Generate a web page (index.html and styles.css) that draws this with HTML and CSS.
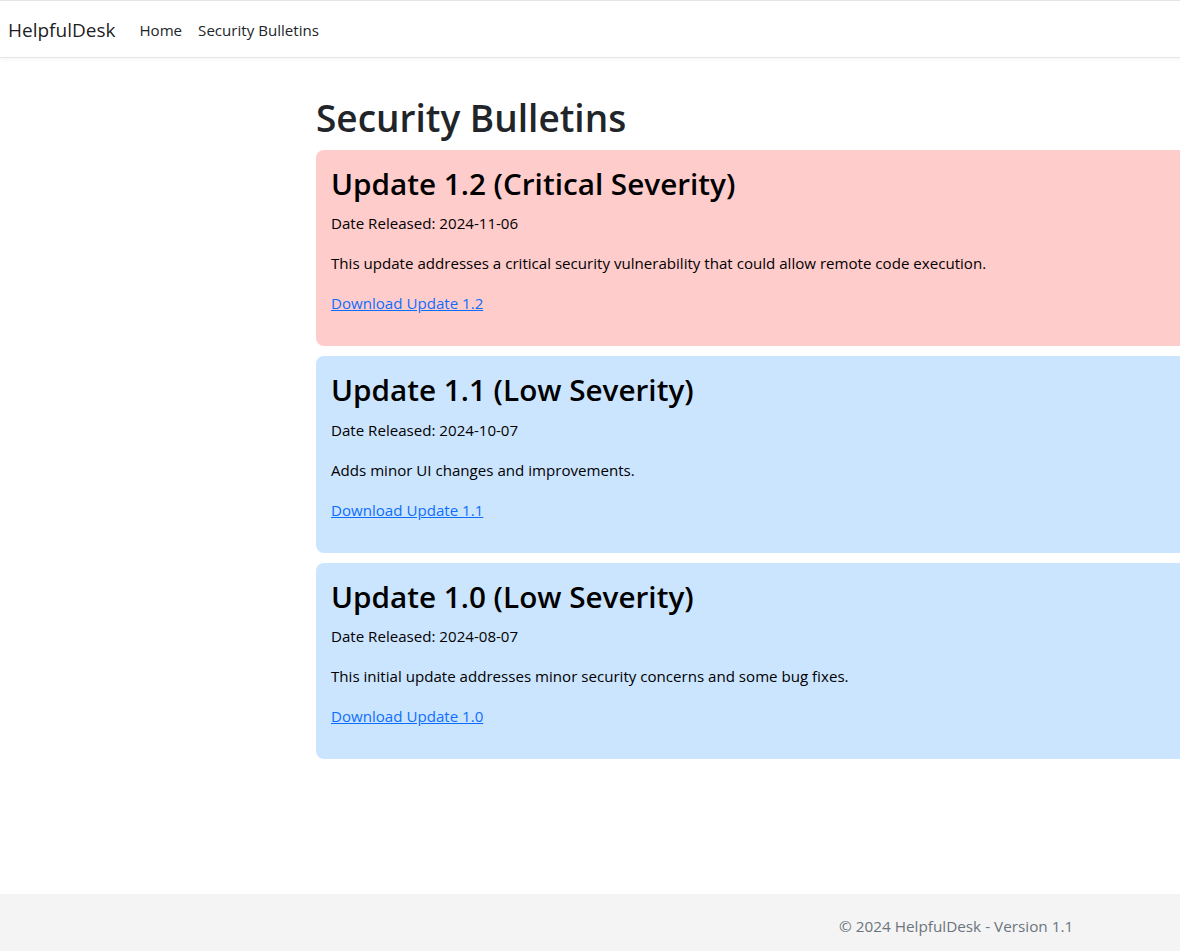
FILE: index.html
```html
<!DOCTYPE html>
<html lang="en">
<head>
<meta charset="utf-8">
<title>Security Bulletins - HelpfulDesk</title>
<link rel="stylesheet" href="styles.css">
</head>
<body>
<div class="page">
  <header class="navbar">
    <a class="brand" href="#">HelpfulDesk</a>
    <nav class="nav-links">
      <a class="nav-link" href="#">Home</a>
      <a class="nav-link" href="#">Security Bulletins</a>
    </nav>
  </header>
  <main class="main">
    <h1 class="title">Security Bulletins</h1>
    <section class="bulletin bulletin-critical">
      <h2 class="bulletin-title">Update 1.2 (Critical Severity)</h2>
      <p class="bulletin-text">Date Released: 2024-11-06</p>
      <p class="bulletin-text">This update addresses a critical security vulnerability that could allow remote code execution.</p>
      <p class="bulletin-text"><a class="download" href="#">Download Update 1.2</a></p>
    </section>
    <section class="bulletin bulletin-low">
      <h2 class="bulletin-title">Update 1.1 (Low Severity)</h2>
      <p class="bulletin-text">Date Released: 2024-10-07</p>
      <p class="bulletin-text">Adds minor UI changes and improvements.</p>
      <p class="bulletin-text"><a class="download" href="#">Download Update 1.1</a></p>
    </section>
    <section class="bulletin bulletin-low">
      <h2 class="bulletin-title">Update 1.0 (Low Severity)</h2>
      <p class="bulletin-text">Date Released: 2024-08-07</p>
      <p class="bulletin-text">This initial update addresses minor security concerns and some bug fixes.</p>
      <p class="bulletin-text"><a class="download" href="#">Download Update 1.0</a></p>
    </section>
  </main>
  <footer class="footer">
    <span class="footer-text">&copy; 2024 HelpfulDesk - Version 1.1</span>
  </footer>
</div>
</body>
</html>
```

FILE: styles.css
```css
* { box-sizing: border-box; }
html, body {
  margin: 0;
  padding: 0;
  height: 100%;
}
body {
  font-family: "Open Sans", "Noto Sans", sans-serif;
  font-size: 15.1px;
  line-height: 24px;
  color: #212529;
  background: #fff;
  overflow: hidden;
}
.page {
  position: relative;
  min-height: 951px;
  overflow: hidden;
}
.navbar {
  display: flex;
  align-items: center;
  height: 58px;
  padding: 2px 8px 0;
  border-top: 1px solid #e5e5e5;
  border-bottom: 1px solid #e5e5e5;
  box-shadow: 0 2px 4px rgba(0,0,0,0.04);
  background: #fff;
}
.brand {
  font-size: 19px;
  color: rgba(0,0,0,0.9);
  text-decoration: none;
  margin-right: 16px;
}
.nav-links { display: flex; }
.nav-link {
  color: #212529;
  text-decoration: none;
  padding: 8px 8px;
}
.main {
  margin-left: 316px;
  width: 1600px;
  padding-top: 36px;
}
.title {
  font-size: 37px;
  font-weight: 600;
  line-height: 48px;
  margin: 0 0 8px;
}
.bulletin {
  border-radius: 8px;
  padding: 15px;
  margin-bottom: 10px;
  color: #000;
}
.bulletin-critical { background: #ffcccc; }
.bulletin-low { background: #cce5ff; }
.bulletin-title {
  font-size: 29.7px;
  font-weight: 600;
  line-height: 38.4px;
  margin: 0 0 8px;
}
.bulletin-text { margin: 0 0 16px; }
.download { color: #0d6efd; text-decoration: underline; }
.footer {
  position: absolute;
  left: 0;
  right: 0;
  bottom: 0;
  height: 57px;
  background: #f4f4f4;
  display: flex;
  align-items: center;
  padding-left: 839px;
  padding-top: 7px;
  color: #6c757d;
  font-size: 15.3px;
}
```
